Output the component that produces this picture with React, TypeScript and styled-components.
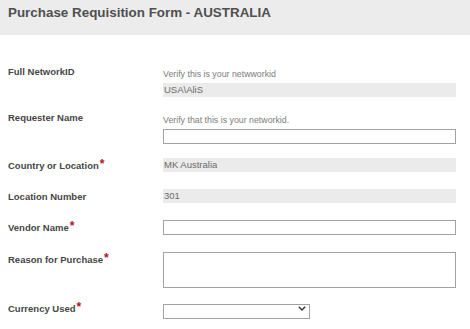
import React from "react"
import styled, { createGlobalStyle } from "styled-components"

const GlobalStyle = createGlobalStyle`
  html, body {
    margin: 0;
    padding: 0;
    background: #ffffff;
    font-family: 'Liberation Sans', Arial, sans-serif;
  }
`

const Page = styled.div`
  width: 470px;
  height: 329px;
  overflow: hidden;
  background: #ffffff;
`

const Header = styled.div`
  height: 35px;
  background-color: #ececec;
  display: flex;
  align-items: center;
  padding: 0 8px 9px;
  box-sizing: border-box;
`

const Title = styled.h1`
  margin: 0;
  font-size: 13.4px;
  font-weight: 700;
  color: #4f4f4f;
  line-height: 16px;
`

const Form = styled.div`
  display: flex;
  flex-direction: column;
  padding: 0 8px;
`

const Row = styled.div<{ $top: number }>`
  display: grid;
  grid-template-columns: 155px 293px;
  align-items: start;
  margin-top: ${(p) => p.$top}px;
`

const Label = styled.div<{ $offset?: number }>`
  font-size: 9.5px;
  font-weight: 700;
  color: #464646;
  line-height: 12px;
  padding-top: ${(p) => p.$offset ?? 2}px;
  white-space: nowrap;
`

const Star = styled.span`
  color: #b0141c;
  font-size: 12px;
  line-height: 8px;
  vertical-align: top;
  margin-left: 1px;
`

const Field = styled.div`
  display: flex;
  flex-direction: column;
`

const Hint = styled.div`
  font-size: 8.8px;
  color: #7c7c7c;
  line-height: 12px;
  margin: 2px 0 3px;
  white-space: nowrap;
`

const ReadOnly = styled.div`
  height: 14px;
  background-color: #ebebeb;
  font-size: 9.5px;
  color: #6a6a6a;
  line-height: 14px;
  padding-left: 1px;
`

const TextInput = styled.input`
  box-sizing: border-box;
  height: 15px;
  width: 100%;
  margin: 0;
  padding: 0 2px;
  border: 1px solid #a2a2a2;
  background: #ffffff;
  font-family: 'Liberation Sans', Arial, sans-serif;
  font-size: 9.5px;
  outline: none;
`

const TextArea = styled.textarea`
  box-sizing: border-box;
  height: 36px;
  width: 100%;
  margin: 0;
  padding: 2px;
  border: 1px solid #a2a2a2;
  background: #ffffff;
  resize: none;
  display: block;
  font-family: 'Liberation Sans', Arial, sans-serif;
  font-size: 9.5px;
  outline: none;
`

const SelectWrap = styled.div`
  position: relative;
  width: 147px;
  height: 15px;
`

const Select = styled.select`
  appearance: none;
  -webkit-appearance: none;
  box-sizing: border-box;
  width: 100%;
  height: 15px;
  margin: 0;
  padding: 0 2px;
  border: 1px solid #a2a2a2;
  border-radius: 0;
  background: #ffffff;
  font-family: 'Liberation Sans', Arial, sans-serif;
  font-size: 9.5px;
  outline: none;
`

const Chevron = styled.svg`
  position: absolute;
  right: 4px;
  top: 5px;
  pointer-events: none;
`

const Required = ({ children }: { children: React.ReactNode }) => (
  <Label>
    {children}
    <Star>*</Star>
  </Label>
)

export default function App() {
  return (
    <Page>
      <GlobalStyle />
      <Header>
        <Title>Purchase Requisition Form - AUSTRALIA</Title>
      </Header>
      <Form>
        <Row $top={31}>
          <Label $offset={0}>Full NetworkID</Label>
          <Field>
            <Hint>Verify this is your netwworkid</Hint>
            <ReadOnly>USA\AliS</ReadOnly>
          </Field>
        </Row>

        <Row $top={15}>
          <Label $offset={0}>Requester Name</Label>
          <Field>
            <Hint>Verify that this is your networkid.</Hint>
            <TextInput type="text" />
          </Field>
        </Row>

        <Row $top={14}>
          <Required>Country or Location</Required>
          <ReadOnly>MK Australia</ReadOnly>
        </Row>

        <Row $top={17}>
          <Label>Location Number</Label>
          <ReadOnly>301</ReadOnly>
        </Row>

        <Row $top={17}>
          <Required>Vendor Name</Required>
          <TextInput type="text" />
        </Row>

        <Row $top={17}>
          <Required>Reason for Purchase</Required>
          <TextArea />
        </Row>

        <Row $top={13}>
          <Required>Currency Used</Required>
          <SelectWrap>
            <Select defaultValue="">
              <option value=""></option>
            </Select>
            <Chevron width="8" height="5" viewBox="0 0 8 5">
              <path d="M0.8 0.8 L4 4 L7.2 0.8" fill="none" stroke="#333" strokeWidth="1.4" />
            </Chevron>
          </SelectWrap>
        </Row>
      </Form>
    </Page>
  )
}
